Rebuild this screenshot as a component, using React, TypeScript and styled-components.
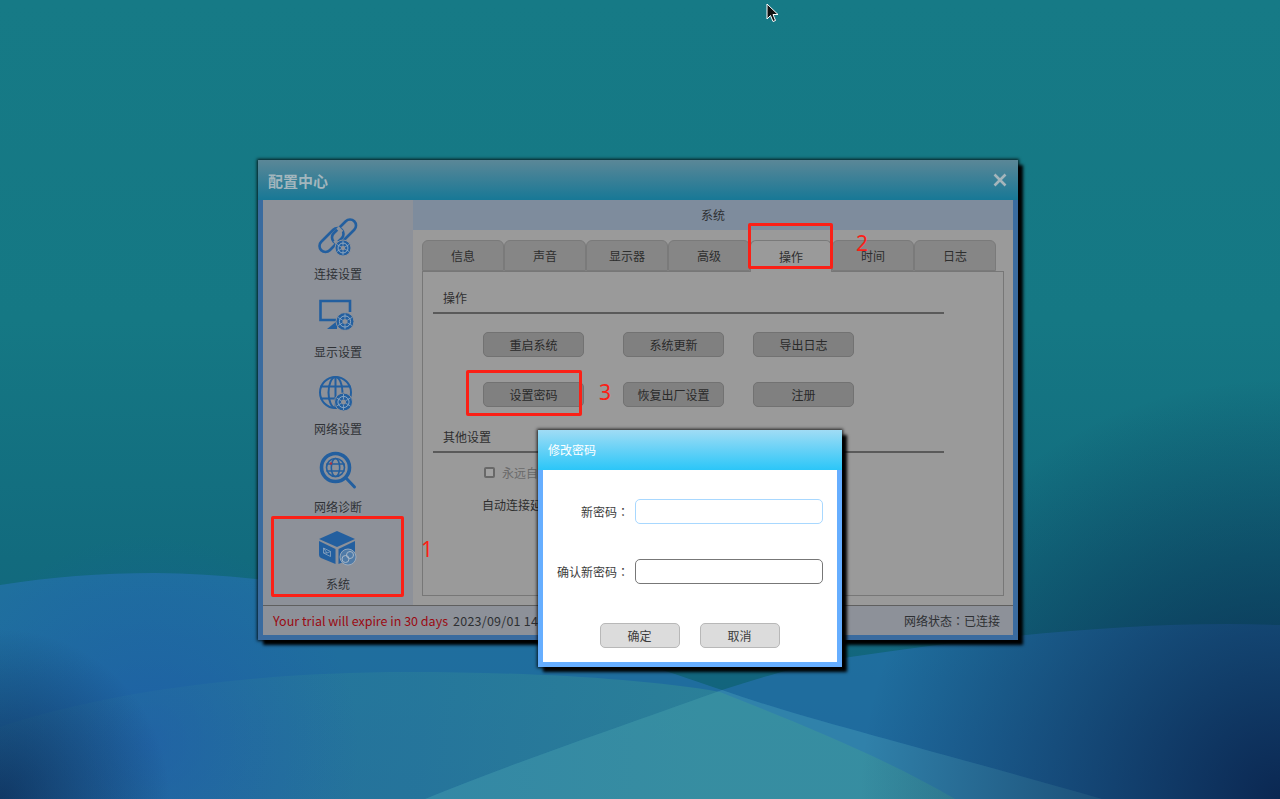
import React from "react";
import styled, { createGlobalStyle } from "styled-components";

const GlobalStyle = createGlobalStyle`
	html, body {
		margin: 0;
		padding: 0;
		height: 100%;
		overflow: hidden;
	}
	body {
		font-family: "Noto Sans CJK SC", "Liberation Sans", sans-serif;
		font-size: 12px;
	}
`;

const Desktop = styled.div`
	position: relative;
	width: 1280px;
	height: 799px;
	overflow: hidden;
	background: linear-gradient(180deg, #167a86 0%, #157884 40%, #126b7e 70%, #125f7c 100%);
`;

const Wallpaper = styled.svg`
	position: absolute;
	left: 0;
	top: 0;
`;

const Cursor = styled.svg`
	position: absolute;
	left: 766px;
	top: 3px;
`;

const Window = styled.div`
	position: absolute;
	left: 258px;
	top: 160px;
	width: 760px;
	height: 480px;
	isolation: isolate;
	display: flex;
	flex-direction: column;
	background: #3a6b9f;
	box-shadow: 0 0 3px 1px rgba(0, 0, 0, 0.8), 5px 5px 3px #000;
`;

const TitleBar = styled.div`
	height: 40px;
	flex: none;
	display: flex;
	align-items: center;
	justify-content: space-between;
	padding: 0 11px 0 10px;
	box-sizing: border-box;
	background: linear-gradient(180deg, #5b8797 0%, #177896 100%);
`;

const TitleText = styled.span`
	font-size: 15px;
	font-weight: 700;
	color: #a3b6bd;
`;

const CloseIcon = styled.svg`
	display: block;
`;

const Body = styled.div`
	flex: 1;
	margin: 0 5px 5px;
	display: flex;
	flex-direction: column;
	background: #8d9199;
	min-height: 0;
`;

const Columns = styled.div`
	flex: 1;
	display: flex;
	min-height: 0;
`;

const Sidebar = styled.div`
	width: 150px;
	flex: none;
	display: flex;
	flex-direction: column;
	align-items: center;
	padding-top: 18px;
	box-sizing: border-box;
`;

const NavItem = styled.div`
	width: 100%;
	height: 77.5px;
	flex: none;
	display: flex;
	flex-direction: column;
	align-items: center;
	color: #2f3236;
`;

const NavIcon = styled.svg`
	display: block;
	flex: none;
`;

const NavLabel = styled.span`
	margin-top: 6px;
	line-height: 16px;
`;

const Main = styled.div`
	flex: 1;
	display: flex;
	flex-direction: column;
	background: #9a9a9a;
	min-width: 0;
`;

const PanelHeader = styled.div`
	height: 30px;
	flex: none;
	display: flex;
	align-items: center;
	justify-content: center;
	padding-bottom: 2px;
	box-sizing: border-box;
	background: #7e8c9d;
	color: #2e3033;
`;

const TabRow = styled.div`
	display: flex;
	margin: 10px 0 0 9px;
	height: 32px;
	flex: none;
	position: relative;
	z-index: 1;
`;

const Tab = styled.div<{ $active?: boolean }>`
	width: 82px;
	height: ${(p) => (p.$active ? "32px" : "31px")};
	box-sizing: border-box;
	display: flex;
	align-items: center;
	justify-content: center;
	border: 1px solid #7a7a7a;
	border-bottom: ${(p) => (p.$active ? "none" : "1px solid #7a7a7a")};
	border-radius: 6px 6px 0 0;
	background: ${(p) => (p.$active ? "#9a9a9a" : "#868686")};
	color: #2e2e2e;
	padding-bottom: ${(p) => (p.$active ? "1px" : "0")};
`;

const TabPanel = styled.div`
	margin: -1px 9px 0;
	height: 325px;
	flex: none;
	box-sizing: border-box;
	border: 1px solid #777;
	padding: 0 59px 0 10px;
`;

const SectionTitle = styled.div`
	height: 42px;
	box-sizing: border-box;
	border-bottom: 2px solid #5a5a5a;
	padding: 17px 0 0 10px;
	line-height: 17px;
	color: #2e2e2e;
`;

const ButtonGrid = styled.div`
	display: grid;
	grid-template-columns: 140px 130px 101px;
	grid-auto-rows: 25px;
	row-gap: 25px;
	margin: 18px 0 0 50px;
`;

const GrayButton = styled.div`
	width: 101px;
	height: 25px;
	box-sizing: border-box;
	display: flex;
	align-items: center;
	justify-content: center;
	padding-bottom: 1px;
	border: 1px solid #727272;
	border-radius: 5px;
	background: #808080;
	color: #2a2a2a;
`;

const OtherSection = styled(SectionTitle)`
	margin-top: 13px;
	height: 33px;
	padding-top: 8px;
`;

const CheckRow = styled.div`
	display: flex;
	align-items: center;
	gap: 7px;
	margin: 11px 0 0 51px;
	color: #6a6a6a;
	line-height: 17px;
`;

const CheckBox = styled.span`
	width: 11px;
	height: 11px;
	box-sizing: border-box;
	border: 2px solid #686868;
	border-radius: 2px;
	background: #a2a2a2;
`;

const DelayRow = styled.div`
	margin: 15px 0 0 49px;
	color: #2e2e2e;
	line-height: 17px;
`;

const StatusBar = styled.div`
	height: 30px;
	flex: none;
	box-sizing: border-box;
	border-top: 1px solid #5f5f5f;
	display: flex;
	align-items: center;
	justify-content: space-between;
	padding: 0 13px 0 10px;
	background: #8d9199;
	color: #2e3033;
`;

const StatusLeft = styled.div`
	display: flex;
	gap: 5px;
	font-size: 12.5px;
	white-space: nowrap;
`;

const TrialText = styled.span`
	color: #9a0a12;
`;

const DateText = styled.span`
	letter-spacing: 0.25px;
`;

const Colon = styled.span`
	font-family: "Noto Sans CJK TC", sans-serif;
`;

const Dialog = styled.div`
	position: absolute;
	left: 538px;
	top: 430px;
	width: 304px;
	height: 237px;
	display: flex;
	flex-direction: column;
	background: #66aeff;
	box-shadow: 0 0 3px 1px rgba(0, 0, 0, 0.8), 5px 5px 3px #000;
`;

const DialogHead = styled.div`
	height: 40px;
	flex: none;
	display: flex;
	align-items: center;
	padding: 0 0 2px 10px;
	box-sizing: border-box;
	color: #fff;
	background: linear-gradient(180deg, #a0dcf5 0%, #2bc6f8 100%);
`;

const DialogBody = styled.div`
	flex: 1;
	margin: 0 5px 5px;
	background: #fff;
	padding-top: 29px;
	box-sizing: border-box;
`;

const FormRow = styled.div`
	display: flex;
	align-items: center;
	height: 25px;
	margin-bottom: 35px;
	color: #3c3c3c;
`;

const FormLabel = styled.label`
	width: 92px;
	flex: none;
	box-sizing: border-box;
	padding-right: 6px;
	text-align: right;
	white-space: nowrap;
`;

const FormInput = styled.div<{ $focused?: boolean }>`
	width: 188px;
	height: 25px;
	box-sizing: border-box;
	background: #fff;
	border: 1px solid ${(p) => (p.$focused ? "#a8d8ff" : "#777")};
	border-radius: 5px;
`;

const DialogButtons = styled.div`
	display: flex;
	justify-content: center;
	gap: 20px;
	padding: 4px 1px 0 0;
`;

const DialogButton = styled.div`
	width: 80px;
	height: 25px;
	box-sizing: border-box;
	display: flex;
	align-items: center;
	justify-content: center;
	border: 1px solid #b8b8b8;
	border-radius: 5px;
	background: #dcdcdc;
	color: #3c3c3c;
`;

const Marker = styled.div<{ $x: number; $y: number; $w: number; $h: number }>`
	position: absolute;
	left: ${(p) => p.$x}px;
	top: ${(p) => p.$y}px;
	width: ${(p) => p.$w}px;
	height: ${(p) => p.$h}px;
	box-sizing: border-box;
	border: 3px solid #fb2016;
	border-radius: 2px;
`;

const MarkerNumber = styled.span<{ $x: number; $y: number }>`
	position: absolute;
	left: ${(p) => p.$x}px;
	top: ${(p) => p.$y}px;
	font-family: "Noto Sans", sans-serif;
	font-size: 21px;
	line-height: 26px;
	color: #fb2016;
`;

const BLUE = "#235f9f";

const Gear = ({ cx, cy, r }: { cx: number; cy: number; r: number }) => (
	<g>
		<circle cx={cx} cy={cy} r={r} fill={BLUE} stroke="#8d9199" strokeWidth="1" />
		<circle cx={cx} cy={cy} r={r * 0.62} fill="none" stroke="#8fa8c2" strokeWidth="1" />
		<circle cx={cx} cy={cy} r={r * 0.28} fill="#8d9199" />
		{[30, 90, 150, 210, 270, 330].map((a) => (
			<line
				key={a}
				x1={cx + Math.cos((a * Math.PI) / 180) * r * 0.3}
				y1={cy + Math.sin((a * Math.PI) / 180) * r * 0.3}
				x2={cx + Math.cos((a * Math.PI) / 180) * r * 0.9}
				y2={cy + Math.sin((a * Math.PI) / 180) * r * 0.9}
				stroke="#8fa8c2"
				strokeWidth="0.8"
			/>
		))}
	</g>
);

const LinkIcon = () => (
	<NavIcon width="44" height="42" viewBox="0 0 44 42">
		<g fill="none" stroke={BLUE} strokeWidth="2.6">
			<rect x="13.5" y="7.5" width="29" height="12" rx="6" transform="rotate(-45 28 13.5)" />
			<rect x="1" y="16" width="29" height="12" rx="6" transform="rotate(-45 15.5 22)" />
		</g>
		<path d="M21.5 9.5 L26 14" stroke="#8d9199" strokeWidth="3.5" />
		<path d="M22 26 L18.5 22.5" stroke="#8d9199" strokeWidth="3.5" />
		<Gear cx={27} cy={30} r={8} />
	</NavIcon>
);

const MonitorIcon = () => (
	<NavIcon width="44" height="42" viewBox="0 0 44 42">
		<path d="M25 24 L4.5 24 L4.5 5 L34 5 L34 16" fill="none" stroke={BLUE} strokeWidth="2.6" />
		<path d="M21 25 L21 33 L11 33 Z" fill={BLUE} />
		<Gear cx={29} cy={25.5} r={9} />
	</NavIcon>
);

const GlobeIcon = () => (
	<NavIcon width="44" height="42" viewBox="0 0 44 42">
		<g fill="none" stroke={BLUE} strokeWidth="2">
			<circle cx="19.5" cy="19.5" r="15.5" />
			<ellipse cx="19.5" cy="19.5" rx="7" ry="15.5" />
			<path d="M4.5 13.5 H34.5 M4.5 25.5 H34.5 M19.5 4 V35" />
		</g>
		<Gear cx={27.5} cy={29} r={9} />
	</NavIcon>
);

const SearchIcon = () => (
	<NavIcon width="44" height="42" viewBox="0 0 44 42">
		<g fill="none" stroke={BLUE}>
			<circle cx="19.5" cy="16.5" r="14" strokeWidth="3.6" />
			<circle cx="19.5" cy="16.5" r="9" strokeWidth="1.6" />
			<ellipse cx="19.5" cy="16.5" rx="4.2" ry="9" strokeWidth="1.6" />
			<path d="M10.5 13 H28.5 M10.5 20 H28.5" strokeWidth="1.6" />
			<path d="M30 27 L38.5 36" strokeWidth="3" strokeLinecap="round" />
		</g>
		<circle cx="15" cy="12.5" r="1.2" fill="#b0303c" />
	</NavIcon>
);

const BoxIcon = () => (
	<NavIcon width="44" height="42" viewBox="0 0 44 42">
		<path d="M21 3 L39 11 L21 19 L3 11 Z" fill={BLUE} />
		<path d="M3 13 L19.5 21 L19.5 36 L5 30 Q3 29 3 27 Z" fill={BLUE} />
		<path d="M22.5 21 L39 13 L39 27 Q39 29 37 30 L22.5 36 Z" fill={BLUE} />
		<path d="M7.5 20 L14.5 23.5 L14.5 28.5 L7.5 25 Z M7.5 20 L11 25 L14.5 23.5 M7.5 25 L11 25" fill="none" stroke="#8da6c0" strokeWidth="0.8" />
		<circle cx="32" cy="29" r="8" fill="#4f7ba8" stroke="#a9b4c0" strokeWidth="0.8" />
		<circle cx="29.5" cy="31" r="3.5" fill="none" stroke="#a9b8c8" strokeWidth="1" />
		<circle cx="34" cy="27" r="3.5" fill="none" stroke="#a9b8c8" strokeWidth="1" />
	</NavIcon>
);

const navItems = [
	{ label: "连接设置", icon: <LinkIcon /> },
	{ label: "显示设置", icon: <MonitorIcon /> },
	{ label: "网络设置", icon: <GlobeIcon /> },
	{ label: "网络诊断", icon: <SearchIcon /> },
	{ label: "系统", icon: <BoxIcon /> },
];

const tabs = ["信息", "声音", "显示器", "高级", "操作", "时间", "日志"];
const actions = ["重启系统", "系统更新", "导出日志", "设置密码", "恢复出厂设置", "注册"];

const App: React.FC = () => {
	return (
		<Desktop>
			<GlobalStyle />
			<Wallpaper width="1280" height="799" viewBox="0 0 1280 799">
				<defs>
					<linearGradient id="frontHill" gradientUnits="userSpaceOnUse" x1="0" y1="0" x2="700" y2="0">
						<stop offset="0" stopColor="#46aa8c" stopOpacity="0.06" />
						<stop offset="0.6" stopColor="#46aa8c" stopOpacity="0.16" />
						<stop offset="1" stopColor="#46aa8c" stopOpacity="0.3" />
					</linearGradient>
					<radialGradient id="blueGlow" gradientUnits="userSpaceOnUse" cx="150" cy="745" r="210">
						<stop offset="0" stopColor="#1d4fb0" stopOpacity="0.4" />
						<stop offset="1" stopColor="#1d4fb0" stopOpacity="0" />
					</radialGradient>
					<radialGradient id="cornerRight" gradientUnits="userSpaceOnUse" cx="1280" cy="799" r="420">
						<stop offset="0" stopColor="#06173f" stopOpacity="0.8" />
						<stop offset="1" stopColor="#06173f" stopOpacity="0" />
					</radialGradient>
					<radialGradient id="cornerLeft" gradientUnits="userSpaceOnUse" cx="0" cy="799" r="170">
						<stop offset="0" stopColor="#06173f" stopOpacity="0.6" />
						<stop offset="1" stopColor="#06173f" stopOpacity="0" />
					</radialGradient>
				</defs>
				<path
					d="M0 585 C50 577 100 573 155 573 C350 575 580 640 722 690 C800 718 950 755 1102 799 L0 799 Z"
					fill="#3177c7"
					opacity="0.45"
				/>
				<path
					d="M1280 625 C1150 620 1000 635 850 657 C800 665 760 678 722 690 C640 720 520 760 425 799 L1280 799 Z"
					fill="#3177c7"
					opacity="0.45"
				/>
				{/* where the two back hills cross */}
				<path
					d="M722 690 C640 720 520 760 425 799 L1102 799 C950 755 800 718 722 690 Z"
					fill="#46aa9c"
					opacity="0.3"
				/>
				<path
					d="M0 727 C110 690 260 672 408 672 C520 672 640 678 720 692 C790 720 880 755 955 799 L0 799 Z"
					fill="url(#frontHill)"
				/>
				<rect width="1280" height="799" fill="url(#blueGlow)" />
				<rect width="1280" height="799" fill="url(#cornerRight)" />
				<rect width="1280" height="799" fill="url(#cornerLeft)" />
			</Wallpaper>
			<Cursor width="14" height="20" viewBox="0 0 14 20">
				<path d="M1 1 L1 16 L4.5 12.5 L7 18.5 L9.5 17.5 L7 11.5 L12 11.5 Z" fill="#111" stroke="#fff" strokeWidth="1" />
			</Cursor>

			<Window>
				<TitleBar>
					<TitleText>配置中心</TitleText>
					<CloseIcon width="14" height="14" viewBox="0 0 14 14">
						<path d="M1.5 1.5 L12.5 12.5 M12.5 1.5 L1.5 12.5" stroke="#a5b5bb" strokeWidth="2.6" />
					</CloseIcon>
				</TitleBar>
				<Body>
					<Columns>
						<Sidebar>
							{navItems.map((item) => (
								<NavItem key={item.label}>
									{item.icon}
									<NavLabel>{item.label}</NavLabel>
								</NavItem>
							))}
						</Sidebar>
						<Main>
							<PanelHeader>系统</PanelHeader>
							<TabRow>
								{tabs.map((tab) => (
									<Tab key={tab} $active={tab === "操作"}>
										{tab}
									</Tab>
								))}
							</TabRow>
							<TabPanel>
								<SectionTitle>操作</SectionTitle>
								<ButtonGrid>
									{actions.map((action) => (
										<GrayButton key={action}>{action}</GrayButton>
									))}
								</ButtonGrid>
								<OtherSection>其他设置</OtherSection>
								<CheckRow>
									<CheckBox />
									<span>永远自动连接</span>
								</CheckRow>
								<DelayRow>自动连接延时</DelayRow>
							</TabPanel>
						</Main>
					</Columns>
					<StatusBar>
						<StatusLeft>
							<TrialText>Your trial will expire in 30 days</TrialText>
							<DateText>2023/09/01 14:30</DateText>
						</StatusLeft>
						<span>
							网络状态<Colon>：</Colon>已连接
						</span>
					</StatusBar>
				</Body>
			</Window>

			<Marker $x={271} $y={516} $w={133} $h={81} />
			<Marker $x={748} $y={223} $w={85} $h={46} />
			<Marker $x={466} $y={370} $w={116} $h={46} />
			<MarkerNumber $x={421} $y={536}>1</MarkerNumber>
			<MarkerNumber $x={856} $y={230}>2</MarkerNumber>
			<MarkerNumber $x={599} $y={379}>3</MarkerNumber>

			<Dialog>
				<DialogHead>修改密码</DialogHead>
				<DialogBody>
					<FormRow>
						<FormLabel>
							新密码<Colon>：</Colon>
						</FormLabel>
						<FormInput $focused />
					</FormRow>
					<FormRow>
						<FormLabel>
							确认新密码<Colon>：</Colon>
						</FormLabel>
						<FormInput />
					</FormRow>
					<DialogButtons>
						<DialogButton>确定</DialogButton>
						<DialogButton>取消</DialogButton>
					</DialogButtons>
				</DialogBody>
			</Dialog>
		</Desktop>
	);
};

export default App;
